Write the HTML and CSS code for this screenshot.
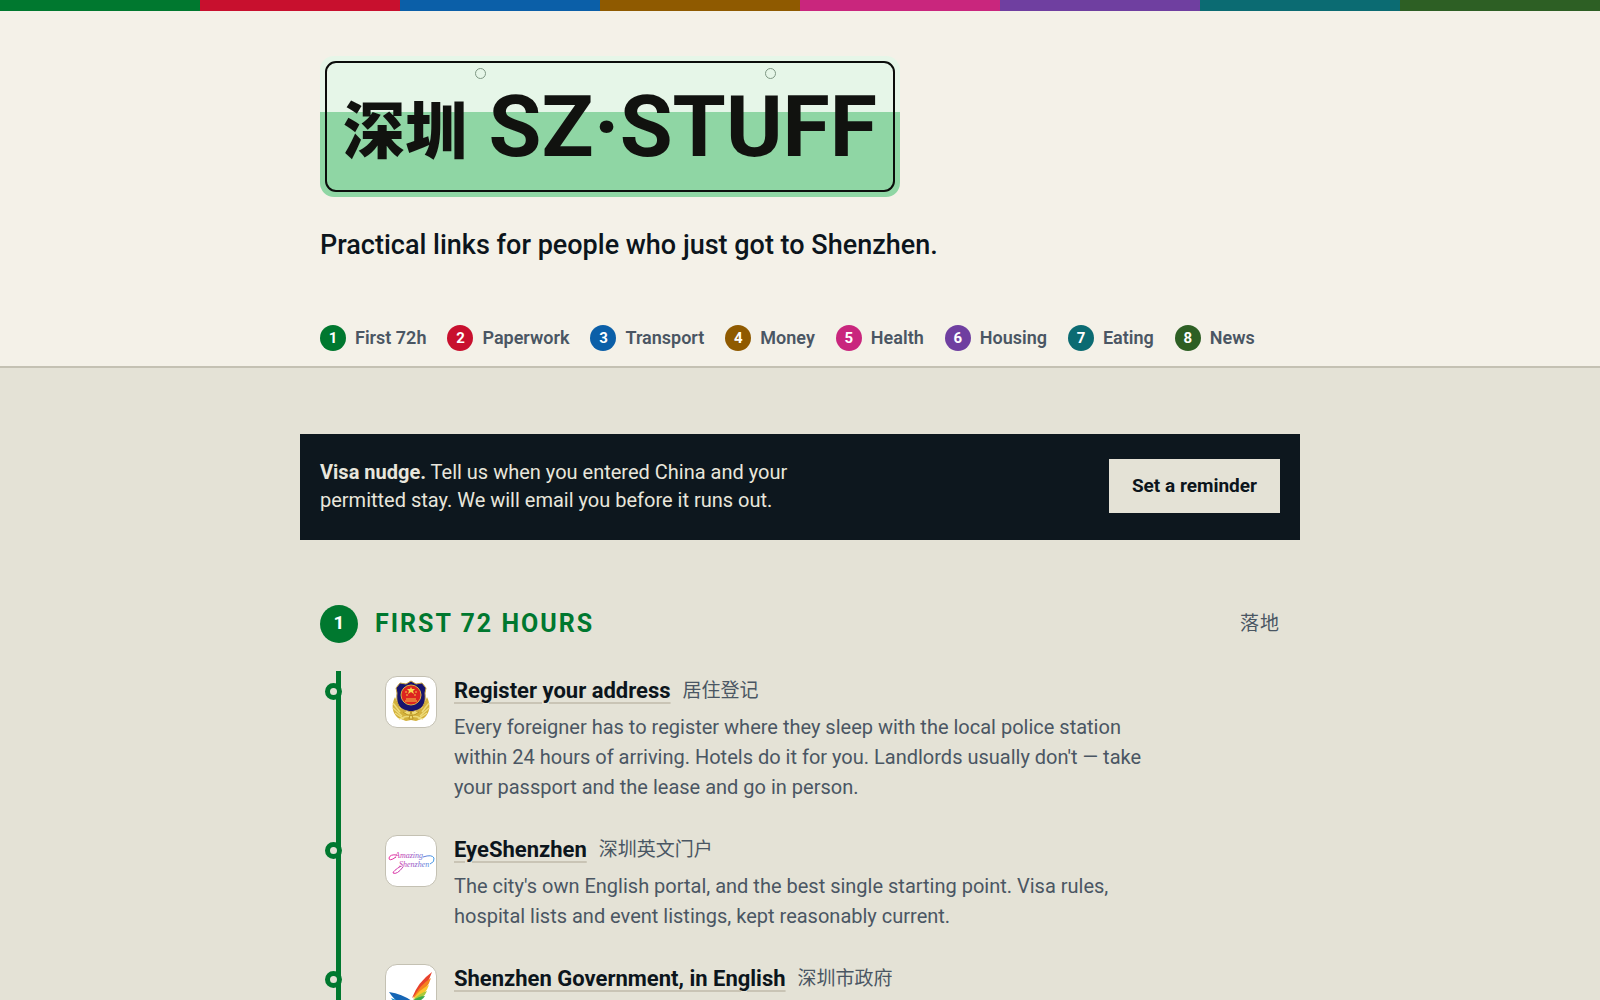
FILE: index.html
```html
<!DOCTYPE html>
<html lang="en">
<head>
<meta charset="utf-8">
<meta name="viewport" content="width=device-width, initial-scale=1">
<title>SZ·STUFF</title>
<link rel="stylesheet" href="styles.css">
</head>
<body>
<header class="site-header">
  <div class="stripe" aria-hidden="true">
    <span class="line-1"></span><span class="line-2"></span><span class="line-3"></span><span class="line-4"></span><span class="line-5"></span><span class="line-6"></span><span class="line-7"></span><span class="line-8"></span>
  </div>
  <div class="wrap">
    <h1 class="plate">
      <span class="plate-frame"><span class="plate-city" lang="zh">深圳</span><span class="plate-name">SZ·STUFF</span></span>
      <span class="bolt bolt-left"></span><span class="bolt bolt-right"></span>
    </h1>
    <p class="tagline">Practical links for people who just got to Shenzhen.</p>
    <nav class="lines">
      <a href="#first"><span class="dot line-1">1</span>First 72h</a>
      <a href="#paperwork"><span class="dot line-2">2</span>Paperwork</a>
      <a href="#transport"><span class="dot line-3">3</span>Transport</a>
      <a href="#money"><span class="dot line-4">4</span>Money</a>
      <a href="#health"><span class="dot line-5">5</span>Health</a>
      <a href="#housing"><span class="dot line-6">6</span>Housing</a>
      <a href="#eating"><span class="dot line-7">7</span>Eating</a>
      <a href="#news"><span class="dot line-8">8</span>News</a>
    </nav>
  </div>
</header>
<main class="page">
  <aside class="nudge">
    <p><strong>Visa nudge.</strong> Tell us when you entered China and your permitted stay. We will email you before it runs out.</p>
    <button type="button">Set a reminder</button>
  </aside>
  <section class="section" id="first">
    <div class="section-head">
      <span class="section-number line-1">1</span>
      <h2>First 72 hours</h2>
      <span class="section-zh" lang="zh">落地</span>
    </div>
    <ul class="stops">
      <li class="stop">
        <span class="logo">
          <svg viewBox="0 0 50 50" aria-hidden="true">
            <path d="M9 20C5 28 6 36 12 41l8 3 5-1 5 1 8-3c6-5 7-13 3-21l-5 11-11 6-11-6z" fill="#d3b13c"/>
            <path d="M7 26l7 9M7 31l9 8M9 36l9 6M43 26l-7 9M43 31l-9 8M41 36l-9 6M13 42q12-6 24 0" stroke="#eddb7b" stroke-width="1.500" fill="none"/>
            <path d="M25 4l5 3 6-1 4 5-1 5c1 9-1 14-7 17l-7 2-7-2c-6-3-8-8-7-17l-1-5 4-5 6 1z" fill="#17146e" stroke="#c7a443" stroke-width="1"/>
            <circle cx="25" cy="18" r="10" fill="#dd2420" stroke="#d8b545" stroke-width="1"/>
            <path d="M25 10l1 2h3l-2 2 1 3-3-2-3 2 1-3-2-2h3z" fill="#f8d94d"/>
            <path d="M19 15h2M29 15h2M20 18h2M28 18h2M20 22h10M19 24h12" stroke="#f2c746" stroke-width="1"/>
            <path d="M25 34l-2 8h4zM17 35q8 7 16 0" fill="#f0db70" stroke="#b89427" stroke-width="1"/>
          </svg>
        </span>
        <div class="stop-body">
          <h3><a href="#register">Register your address</a><span lang="zh">居住登记</span></h3>
          <p>Every foreigner has to register where they sleep with the local police station within 24 hours of arriving. Hotels do it for you. Landlords usually don't — take your passport and the lease and go in person.</p>
        </div>
      </li>
      <li class="stop">
        <span class="logo">
          <svg viewBox="0 0 50 50" aria-hidden="true">
            <defs><linearGradient id="script" gradientUnits="userSpaceOnUse" x1="3" y1="0" x2="48" y2="0"><stop offset="0" stop-color="#ee2f9f"/><stop offset=".5" stop-color="#a04fc0"/><stop offset="1" stop-color="#3f9be8"/></linearGradient></defs>
            <text class="script" x="9" y="22" fill="url(#script)">Amazing</text>
            <text class="script" x="13" y="31" fill="url(#script)">Shenzhen</text>
            <path d="M10 21q-7 5-7 1 1-4 8-3M37 21q9-3 11 1 1 4-4 6M15 30q-8 5-8 7 4 2 10-6" fill="none" stroke="url(#script)" stroke-width="1"/>
          </svg>
        </span>
        <div class="stop-body">
          <h3><a href="#eyeshenzhen">EyeShenzhen</a><span lang="zh">深圳英文门户</span></h3>
          <p>The city's own English portal, and the best single starting point. Visa rules, hospital lists and event listings, kept reasonably current.</p>
        </div>
      </li>
      <li class="stop">
        <span class="logo">
          <svg viewBox="0 0 50 50" aria-hidden="true">
            <path d="M46 7Q32 17 26 33q16-12 20-26z" fill="#e8412c"/>
            <path d="M45 13Q34 20 27 33q15-8 18-20z" fill="#f58220"/>
            <path d="M43 20q-9 4-16 14 13-4 16-14z" fill="#fbc52d"/>
            <path d="M41 26q-7 2-14 9 11-1 14-9z" fill="#a8c93a"/>
            <path d="M39 31q-6 0-13 5 9 2 13-5z" fill="#3dab4b"/>
            <path d="M3 27q13 2 23 9l6 3q-6 6-14 3Q8 35 3 27z" fill="#1666b5"/>
            <path d="M5 33q9 4 18 5l6 2q-6 5-12 3-8-3-12-10z" fill="#1b98d5"/>
            <path d="M9 39q10 2 20-1-6 9-12 7-5-2-8-6z" fill="#114b9b"/>
          </svg>
        </span>
        <div class="stop-body">
          <h3><a href="#government">Shenzhen Government, in English</a><span lang="zh">深圳市政府</span></h3>
        </div>
      </li>
    </ul>
  </section>
</main>
</body>
</html>
```
FILE: styles.css
```css
*, *::before { box-sizing: border-box; }
body {
  margin: 0;
  background: #e4e2d6;
  color: #0c151c;
  font-family: Roboto, "Noto Sans CJK SC", sans-serif;
  font-size: 20px;
  line-height: 30px;
}
h1, h2, h3, p, ul { margin: 0; padding: 0; }
a { color: inherit; }

.line-1 { background: #00782f; }
.line-2 { background: #c8102e; }
.line-3 { background: #0b5fa8; }
.line-4 { background: #8f5a00; }
.line-5 { background: #c9267d; }
.line-6 { background: #6f3fa0; }
.line-7 { background: #0b6b72; }
.line-8 { background: #2d5f24; }

.site-header {
  background: #f4f1e8;
  border-bottom: 2px solid #c4c1b3;
}
.stripe { display: flex; height: 11px; }
.stripe span { flex: 1; }
.wrap { max-width: 1000px; margin: 0 auto; padding: 45px 20px 15px; }

.plate {
  position: relative;
  width: fit-content;
  padding: 5px;
  border-radius: 14px;
  background: linear-gradient(#e6f6e8 40%, #8fd6a4 40%);
  color: #11120f;
}
.plate-frame {
  display: flex;
  align-items: center;
  justify-content: space-between;
  width: 570px;
  max-width: 100%;
  height: 131px;
  padding: 0 16px;
  border: 2px solid #0b0d0b;
  border-radius: 11px;
  white-space: nowrap;
}
.plate-city { font: 900 62px/1 "Noto Sans CJK SC", sans-serif; }
.plate-name { font: 700 86px/1 Roboto, sans-serif; }
.bolt {
  position: absolute;
  top: 12px;
  width: 11px;
  height: 11px;
  border: 1px solid #7f9884;
  border-radius: 50%;
}
.bolt-left { left: 155px; }
.bolt-right { right: 124px; }

.tagline { margin-top: 28px; font-size: 27px; line-height: 40px; font-weight: 500; }
.lines { display: flex; flex-wrap: wrap; gap: 8px 21px; margin-top: 60px; }
.lines a {
  display: flex;
  align-items: center;
  gap: 9px;
  color: #4a5663;
  font-size: 18px;
  line-height: 26px;
  font-weight: 600;
  text-decoration: none;
}
.dot {
  width: 26px;
  height: 26px;
  border-radius: 50%;
  color: #fff;
  font-size: 15px;
  font-weight: 700;
  text-align: center;
}

.page { max-width: 1000px; margin: 0 auto; padding-top: 66px; }
.nudge {
  display: flex;
  align-items: center;
  justify-content: space-between;
  gap: 20px;
  padding: 24px 20px 26px;
  background: #0d171e;
  color: #e8e6dc;
}
.nudge p { max-width: 490px; line-height: 28px; }
.nudge button {
  padding: 12px 23px;
  border: 0;
  background: #e4e2d6;
  color: #0c151c;
  font: 700 19px/30px Roboto, sans-serif;
}

.section { padding: 65px 20px 64px; }
.section-head { display: flex; align-items: center; gap: 17px; }
.section-number {
  width: 38px;
  height: 38px;
  border-radius: 50%;
  color: #fff;
  font-size: 19px;
  line-height: 36px;
  font-weight: 700;
  text-align: center;
}
.section h2 {
  flex: 1;
  color: #00782f;
  font-size: 25px;
  letter-spacing: 2px;
  text-transform: uppercase;
}
.section-zh { color: #4a5663; font-size: 19px; letter-spacing: 1px; }

.stops {
  margin: 28px 0 0 16px;
  padding-top: 5px;
  border-left: 5px solid #00782f;
  list-style: none;
}
.stop { position: relative; display: flex; gap: 17px; padding: 0 0 33px 44px; }
.stop::before {
  content: "";
  position: absolute;
  left: -16px;
  top: 7px;
  width: 17px;
  height: 17px;
  border: 5px solid #00782f;
  border-radius: 50%;
  background: #e4e2d6;
}
.logo {
  flex: none;
  width: 52px;
  height: 52px;
  border: 1px solid #c4c1b3;
  border-radius: 12px;
  background: #fff;
  overflow: hidden;
}
.logo svg { display: block; width: 50px; height: 50px; }
.script { font: italic 8px "Liberation Serif", serif; }
.stop-body { max-width: 700px; }
.stop h3 { display: flex; flex-wrap: wrap; gap: 0 12px; margin-bottom: 6px; font-size: 22px; }
.stop h3 a {
  text-decoration: underline #c9c4b5 2px;
  text-underline-offset: 4px;
}
.stop h3 span { color: #4a5663; font-size: 19px; font-weight: 400; }
.stop p { color: #4a5663; }
```
